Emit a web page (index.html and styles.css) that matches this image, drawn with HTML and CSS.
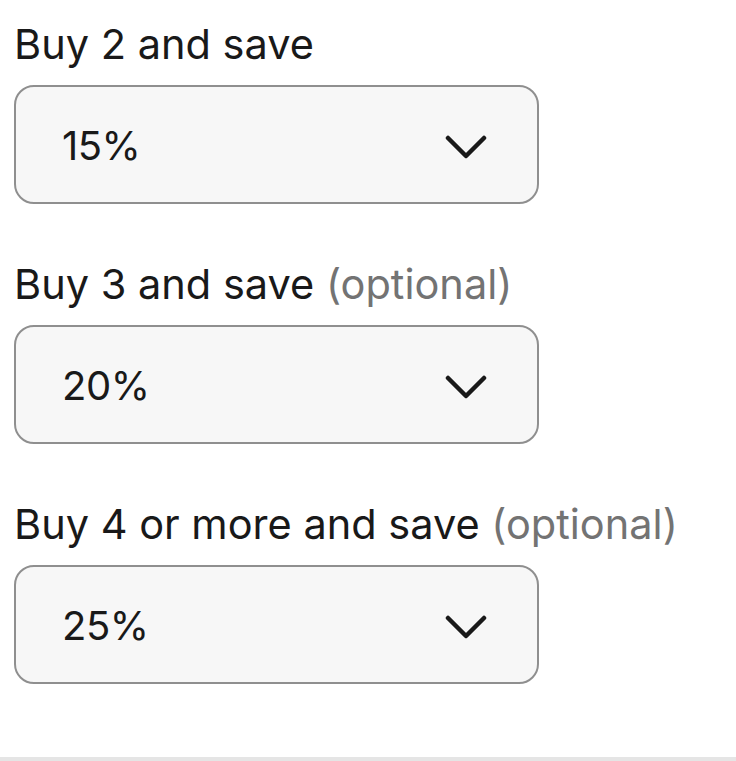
FILE: index.html
```html
<!DOCTYPE html>
<html lang="en">
<head>
	<meta charset="UTF-8" />
	<meta name="viewport" content="width=device-width, initial-scale=1.0" />
	<title>Volume pricing</title>
	<link rel="stylesheet" href="styles.css">
</head>
<body>
	<!-- Volume discounts -->
	<main class="discounts">
		<div class="field">
			<label class="field-label" for="tier2">Buy 2 and save</label>
			<div class="select" id="tier2">
				<span class="select-value">15%</span>
				<svg class="chevron" width="42" height="24" viewBox="0 0 42 24"><polyline points="3,3 21,21 39,3" /></svg>
			</div>
		</div>

		<div class="field">
			<label class="field-label" for="tier3">Buy 3 and save <span class="optional">(optional)</span></label>
			<div class="select" id="tier3">
				<span class="select-value">20%</span>
				<svg class="chevron" width="42" height="24" viewBox="0 0 42 24"><polyline points="3,3 21,21 39,3" /></svg>
			</div>
		</div>

		<div class="field">
			<label class="field-label" for="tier4">Buy 4 or more and save <span class="optional">(optional)</span></label>
			<div class="select" id="tier4">
				<span class="select-value">25%</span>
				<svg class="chevron" width="42" height="24" viewBox="0 0 42 24"><polyline points="3,3 21,21 39,3" /></svg>
			</div>
		</div>
	</main>
	<!-- End of Volume discounts -->
	<div class="divider"></div>
</body>
</html>
```

FILE: styles.css
```css
/* Variables */
:root {
	--text: #191919;
	--muted: #737373;
	--border: #8f8f8f;
	--field-bg: #f7f7f7;
	--divider: #e5e5e5;
}
/* End of Variables */

* {
	margin: 0;
	padding: 0;
	box-sizing: border-box;
}

html, body {
	height: 100%;
}

body {
	display: flex;
	flex-direction: column;
	background: #fff;
	color: var(--text);
	font-family: Inter, "Open Sans", sans-serif;
}

.discounts {
	flex: 1;
	padding: 20px 0 0 14px;
}

.field {
	margin-bottom: 56px;
}

.field-label {
	display: block;
	font-size: 41.5px;
	line-height: 48px;
	margin-bottom: 17px;
}

.field-label .optional {
	color: var(--muted);
}

.select {
	display: flex;
	align-items: center;
	justify-content: space-between;
	width: 525px;
	height: 119px;
	padding: 0 50px 0 46px;
	background-color: var(--field-bg);
	border: 2px solid var(--border);
	border-radius: 20px;
}

.select-value {
	font-size: 40px;
	letter-spacing: -0.5px;
	line-height: 48px;
	padding-top: 2px;
}

.chevron {
	display: block;
	margin-top: 4px;
}

.chevron polyline {
	fill: none;
	stroke: var(--text);
	stroke-width: 4.5;
	stroke-linecap: round;
	stroke-linejoin: round;
}

.divider {
	height: 4px;
	background: var(--divider);
}
```
